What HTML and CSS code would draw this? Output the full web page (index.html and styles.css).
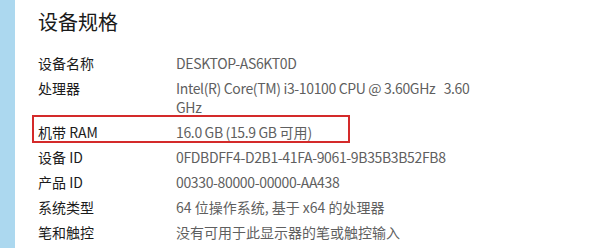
FILE: index.html
```html
<!DOCTYPE html>
<html lang="zh-CN">
<head>
<meta charset="utf-8">
<link rel="stylesheet" href="styles.css">
</head>
<body>
<div class="page">
  <div class="strip"></div>
  <main class="content">
    <h1 class="title">设备规格</h1>
    <dl class="specs">
      <div class="row"><dt>设备名称</dt><dd class="latin">DESKTOP-AS6KT0D</dd></div>
      <div class="row"><dt>处理器</dt><dd class="latin">Intel(R) Core(TM) i3-10100 CPU @ 3.60GHz&nbsp;&nbsp;&nbsp;3.60<br>GHz</dd></div>
      <div class="row marked"><dt>机带 RAM</dt><dd><span class="latin">16.0 GB (15.9 GB </span>可用)</dd></div>
      <div class="row"><dt>设备 ID</dt><dd class="latin">0FDBDFF4-D2B1-41FA-9061-9B35B3B52FB8</dd></div>
      <div class="row"><dt>产品 ID</dt><dd class="latin">00330-80000-00000-AA438</dd></div>
      <div class="row"><dt>系统类型</dt><dd>64 位操作系统, 基于 x64 的处理器</dd></div>
      <div class="row"><dt>笔和触控</dt><dd>没有可用于此显示器的笔或触控输入</dd></div>
    </dl>
  </main>
</div>
</body>
</html>
```
FILE: styles.css
```css
html, body {
  margin: 0;
  padding: 0;
  background: #ffffff;
}
body {
  font-family: "Noto Sans CJK SC", sans-serif;
  font-size: 14px;
}
.page {
  display: flex;
  width: 600px;
  height: 248px;
  overflow: hidden;
}
.strip {
  width: 15px;
  flex: none;
  background: #acd8ef;
}
.content {
  flex: 1;
  padding: 8px 0 0 23px;
}
.title {
  margin: 0;
  font-size: 20px;
  line-height: 28px;
  font-weight: 400;
  color: #1a1a1a;
}
.specs {
  margin: 15px 0 0 0;
}
.row {
  display: flex;
  padding: 3px 0;
  line-height: 19px;
  position: relative;
}
.row dt {
  width: 138px;
  flex: none;
  color: #1b1b1b;
}
.row dd {
  margin: 0;
  color: #5f5f5f;
}
.latin {
  letter-spacing: -0.35px;
}
.marked::after {
  content: "";
  position: absolute;
  left: -6px;
  top: -5px;
  width: 314px;
  height: 24px;
  border: 2px solid #d42a2a;
}
```
